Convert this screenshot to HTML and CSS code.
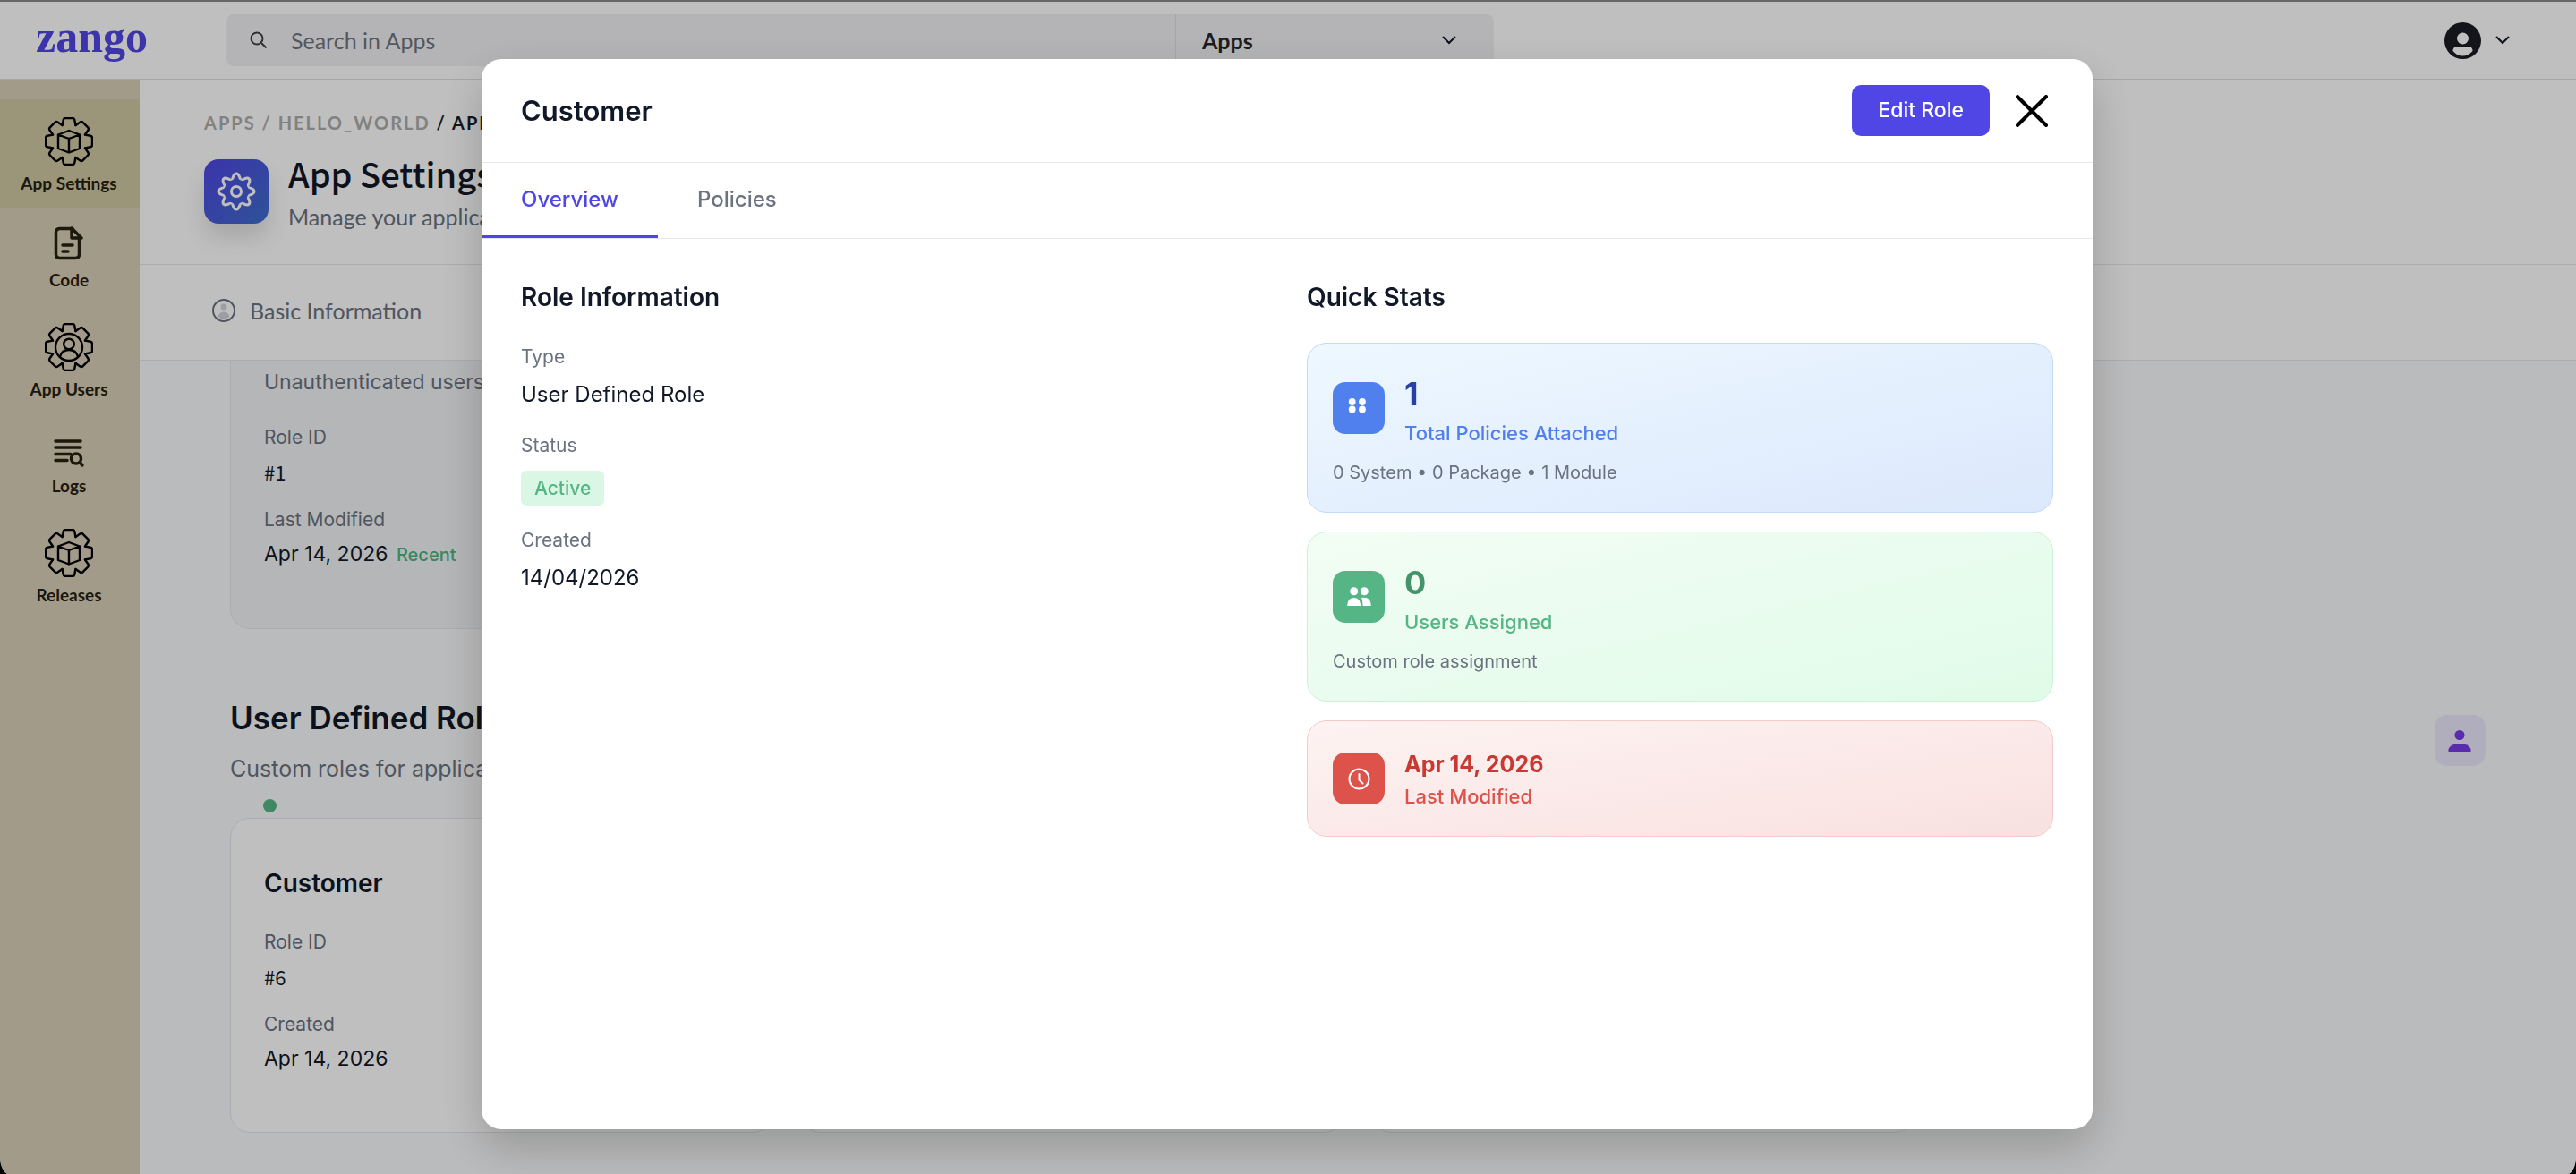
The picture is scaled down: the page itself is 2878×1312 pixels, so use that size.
FILE: index.html
```html
<!DOCTYPE html>
<html lang="en">
<head>
    <meta charset="UTF-8">
    <meta name="viewport" content="width=device-width, initial-scale=1.0">
    <title>Zango - App Settings</title>
    <link rel="stylesheet" href="styles.css">
</head>
<body>
    <!-- shared icon shapes -->
    <svg class="defs" aria-hidden="true">
        <defs>
            <path id="tooth" d="M-7.4-18L-6.3-24Q-5.9-26-3.9-26H3.9Q5.9-26 6.3-24L7.4-18"/>
            <g id="gear">
                <use href="#tooth"/>
                <use href="#tooth" transform="rotate(45)"/>
                <use href="#tooth" transform="rotate(90)"/>
                <use href="#tooth" transform="rotate(135)"/>
                <use href="#tooth" transform="rotate(180)"/>
                <use href="#tooth" transform="rotate(225)"/>
                <use href="#tooth" transform="rotate(270)"/>
                <use href="#tooth" transform="rotate(315)"/>
            </g>
            <path id="cube" d="M0-12L12-7.5V8L0 12.5L-12 8V-7.5ZM-12-7.5L0-3L12-7.5M0-3V12.5"/>
            <path id="lobe" d="M-5.9-14.2C-3-13-4.2-20 0-20C4.2-20 3-13 5.9-14.2"/>
        </defs>
    </svg>

    <div class="page">
        <header class="topbar">
            <a class="logo" href="#">zango</a>
            <div class="search">
                <svg class="search-icon" viewBox="0 0 20 20"><circle cx="8" cy="8" r="6.5"/><path d="M13 13L18.5 18.5"/></svg>
                <input class="search-input" type="text" placeholder="Search in Apps" aria-label="Search in Apps">
                <div class="search-scope">
                    <select class="scope-select" aria-label="Search scope">
                        <option>Apps</option>
                    </select>
                    <svg class="chevron" viewBox="0 0 16 10"><path d="M1 1L8 8L15 1"/></svg>
                </div>
            </div>
            <button class="profile" aria-label="Account">
                <svg class="avatar" viewBox="0 0 41 41"><circle class="avatar-disc" cx="20.5" cy="20.5" r="20.5"/><circle cx="20.5" cy="18" r="6.5"/><path d="M9.5 32V31Q10 27 15 27H26Q31 27 31.500 31V32Q27 37.500 20.500 37.500Q14 37.500 9.500 32Z"/></svg>
                <svg class="chevron" viewBox="0 0 16 10"><path d="M1 1L8 8L15 1"/></svg>
            </button>
        </header>

        <div class="layout">
            <nav class="sidebar">
                <a class="nav-item active" href="#">
                    <svg class="nav-gear" viewBox="-27 -27 54 54"><use href="#gear"/><use href="#cube"/></svg>
                    App Settings
                </a>
                <a class="nav-item" href="#">
                    <svg class="nav-icon" viewBox="0 0 40 40"><path d="M24 2.500H10Q5.500 2.500 5.500 7V31Q5.500 35.500 10 35.500H27Q31.500 35.500 31.500 31V13"/><path d="M23 2.500V13H33.500M23 2L34 13"/><path d="M13 21H24M13 28H19"/></svg>
                    Code
                </a>
                <a class="nav-item" href="#">
                    <svg class="nav-gear" viewBox="-27 -27 54 54"><use href="#gear"/><circle cx="0" cy="0" r="15"/><circle cx="0" cy="-3.500" r="5.800"/><path d="M-10 10.500Q-8 3 0 3Q8 3 10 10.500"/></svg>
                    App Users
                </a>
                <a class="nav-item" href="#">
                    <svg class="nav-icon" viewBox="0 0 40 40"><path d="M5 10H33M5 17H33M5 24.500H22M5 31.500H18"/><circle cx="28" cy="29.500" r="5.500"/><path d="M32 33.500L35 37"/></svg>
                    Logs
                </a>
                <a class="nav-item" href="#">
                    <svg class="nav-gear" viewBox="-27 -27 54 54"><use href="#gear"/><use href="#cube"/></svg>
                    Releases
                </a>
            </nav>

            <main class="content">
                <div class="page-header">
                    <div class="breadcrumb"><a href="#">APPS</a> <a href="#">/ HELLO_WORLD</a> <span>/ APP SETTINGS</span></div>
                    <div class="page-title-row">
                        <div class="page-icon">
                            <svg viewBox="-22 -22 44 44">
                                <use href="#lobe"/>
                                <use href="#lobe" transform="rotate(45)"/>
                                <use href="#lobe" transform="rotate(90)"/>
                                <use href="#lobe" transform="rotate(135)"/>
                                <use href="#lobe" transform="rotate(180)"/>
                                <use href="#lobe" transform="rotate(225)"/>
                                <use href="#lobe" transform="rotate(270)"/>
                                <use href="#lobe" transform="rotate(315)"/>
                                <circle cx="0" cy="0" r="5.500"/>
                            </svg>
                        </div>
                        <div>
                            <h1>App Settings</h1>
                            <p>Manage your application settings</p>
                        </div>
                    </div>
                </div>

                <div class="page-tabs">
                    <a class="page-tab" href="#">
                        <svg viewBox="0 0 26 26"><circle class="ring" cx="13" cy="13" r="12"/><circle class="fill" cx="13" cy="9" r="3.500"/><path class="fill" d="M6.500 20Q8 14.500 13 14.500Q18 14.500 19.500 20Q13 25 6.500 20Z"/></svg>
                        Basic Information
                    </a>
                </div>

                <div class="roles">
                    <div class="role-grid">
                        <div class="role-card system">
                            <p class="role-desc">Unauthenticated users</p>
                            <dl class="role-fields">
                                <div><dt>Role ID</dt><dd class="role-id">#1</dd></div>
                                <div><dt>Last Modified</dt><dd>Apr 14, 2026 <span class="recent">Recent</span></dd></div>
                            </dl>
                        </div>
                    </div>

                    <div class="section-head">
                        <div>
                            <h2>User Defined Roles</h2>
                            <p>Custom roles for application users</p>
                        </div>
                        <div class="section-icon">
                            <svg viewBox="0 0 57 57"><circle cx="28" cy="22.500" r="5.500"/><path d="M15.500 41V38Q18 32 28 32Q38 32 40.500 38V41Z"/></svg>
                        </div>
                    </div>

                    <div class="role-grid">
                        <div class="role-card">
                            <span class="status-dot"></span>
                            <h3>Customer</h3>
                            <dl class="role-fields">
                                <div><dt>Role ID</dt><dd class="role-id">#6</dd></div>
                                <div><dt>Created</dt><dd>Apr 14, 2026</dd></div>
                            </dl>
                        </div>
                        <div class="role-card"></div>
                        <div class="role-card"></div>
                    </div>
                </div>
            </main>
        </div>
    </div>

    <div class="overlay">
        <div class="modal" role="dialog" aria-labelledby="modal-title">
            <div class="modal-header">
                <h2 id="modal-title">Customer</h2>
                <button class="edit-btn">Edit Role</button>
                <button class="close-btn" aria-label="Close">
                    <svg viewBox="0 0 36 36"><path d="M2 2L34 34M34 2L2 34"/></svg>
                </button>
            </div>
            <div class="modal-tabs">
                <button class="tab active">Overview</button>
                <button class="tab">Policies</button>
            </div>
            <div class="modal-body">
                <section>
                    <h3>Role Information</h3>
                    <dl class="info">
                        <div><dt>Type</dt><dd>User Defined Role</dd></div>
                        <div><dt>Status</dt><dd class="badge-row"><span class="badge">Active</span></dd></div>
                        <div><dt>Created</dt><dd>14/04/2026</dd></div>
                    </dl>
                </section>
                <section>
                    <h3>Quick Stats</h3>
                    <div class="stats">
                        <div class="stat blue">
                            <div class="stat-main">
                                <svg class="stat-icon" viewBox="0 0 58 58"><circle cx="21.700" cy="22" r="3.900"/><circle cx="33" cy="22" r="3.900"/><circle cx="21.700" cy="30.500" r="3.900"/><circle cx="33" cy="30.500" r="3.900"/></svg>
                                <div>
                                    <p class="stat-value">1</p>
                                    <p class="stat-label">Total Policies Attached</p>
                                </div>
                            </div>
                            <p class="stat-note">0 System • 0 Package • 1 Module</p>
                        </div>
                        <div class="stat green">
                            <div class="stat-main">
                                <svg class="stat-icon" viewBox="0 0 58 58"><circle cx="23.700" cy="22.700" r="4.500"/><circle cx="35.300" cy="22.700" r="4.500"/><path d="M16.300 39V37.500Q17 30 23.700 30Q30.300 30 31 37.500V39ZM32 30Q42 28.500 42.700 37.500V39H33.500V37Q33.500 33 32 30Z"/></svg>
                                <div>
                                    <p class="stat-value">0</p>
                                    <p class="stat-label">Users Assigned</p>
                                </div>
                            </div>
                            <p class="stat-note">Custom role assignment</p>
                        </div>
                        <div class="stat red">
                            <div class="stat-main">
                                <svg class="stat-icon outline" viewBox="0 0 58 58"><circle cx="29.500" cy="29.500" r="11"/><path d="M29.500 24V30.500L33.500 34.500"/></svg>
                                <div>
                                    <p class="stat-value small">Apr 14, 2026</p>
                                    <p class="stat-label">Last Modified</p>
                                </div>
                            </div>
                        </div>
                    </div>
                </section>
            </div>
        </div>
    </div>
</body>
</html>
```
FILE: styles.css
```css
* {
    box-sizing: border-box;
    margin: 0;
    padding: 0;
}

body {
    font-family: 'Inter', sans-serif;
    background-color: #000;
    color: #111827;
    height: 100vh;
    overflow: hidden;
}

a {
    color: inherit;
    text-decoration: none;
}

button {
    font-family: inherit;
    border: none;
    background: none;
    cursor: pointer;
}

.defs {
    position: absolute;
    width: 0;
    height: 0;
}

.page {
    display: flex;
    flex-direction: column;
    height: 100vh;
    overflow: hidden;
    background-color: #fff;
    border-top: 2px solid #888;
    border-radius: 0 0 10px 10px / 0 0 20px 20px;
}

/* Top bar */
.topbar {
    display: flex;
    align-items: center;
    flex-shrink: 0;
    height: 87px;
    padding: 0 74px 0 40px;
    border-bottom: 1px solid #dcdee2;
    font-family: 'Lato', sans-serif;
}

.logo {
    width: 213px;
    padding-bottom: 8px;
    font-family: 'Liberation Serif', serif;
    font-size: 50px;
    font-weight: bold;
    line-height: 56px;
    color: #4f46e5;
}

.search {
    display: flex;
    flex: 1;
    align-items: center;
    max-width: 1416px;
    height: 58px;
    padding-left: 26px;
    background-color: #f0f1f4;
    border-radius: 8px;
}

.search-icon {
    width: 20px;
    height: 20px;
    fill: none;
    stroke: #3f4044;
    stroke-width: 2;
}

.search-input {
    flex: 1;
    min-width: 0;
    height: 58px;
    padding-left: 26px;
    border: none;
    outline: none;
    background: none;
    font-family: inherit;
    font-size: 25px;
}

.search-input::placeholder {
    color: #70757e;
}

.search-scope {
    display: flex;
    align-items: center;
    width: 356px;
    height: 58px;
    padding: 0 42px 0 29px;
    border-left: 1px solid #dcdee2;
}

.scope-select {
    flex: 1;
    appearance: none;
    border: none;
    background: none;
    font-family: inherit;
    font-size: 25px;
    font-weight: bold;
    color: #26272b;
}

.chevron {
    width: 16px;
    height: 10px;
    fill: none;
    stroke: #111827;
    stroke-width: 2;
}

.profile {
    display: flex;
    align-items: center;
    gap: 16px;
    margin-left: auto;
}

.avatar {
    width: 41px;
    height: 41px;
    fill: #fff;
}

.avatar-disc {
    fill: #1b1c23;
}

/* Sidebar */
.layout {
    display: flex;
    flex: 1;
    min-height: 0;
}

.sidebar {
    width: 156px;
    flex-shrink: 0;
    padding: 22px 2px 0 0;
    background-color: #dacfb9;
}

.nav-item {
    display: flex;
    flex-direction: column;
    align-items: center;
    gap: 8px;
    margin-right: -2px;
    padding: 20px 2px 16px 0;
    font-family: 'Lato', sans-serif;
    font-size: 19px;
    font-weight: bold;
    line-height: 24px;
    color: #26210f;
}

.nav-item.active {
    background-color: #cfc7a3;
}

.nav-gear,
.nav-icon {
    fill: none;
    stroke: #000;
    stroke-width: 2.4;
    stroke-linecap: round;
    stroke-linejoin: round;
}

.nav-gear {
    width: 54px;
    height: 54px;
}

.nav-icon {
    width: 40px;
    height: 40px;
    stroke: #26210f;
    stroke-width: 3.5;
}

/* Page */
.content {
    flex: 1;
    min-width: 0;
    overflow: hidden;
    background-color: #f9fafb;
}

.page-header {
    padding: 36px 72px 37px;
    background-color: #fff;
    border-bottom: 1px solid #e5e7eb;
    font-family: 'Lato', sans-serif;
}

.breadcrumb {
    margin-bottom: 29px;
    font-size: 20px;
    font-weight: bold;
    line-height: 24px;
    letter-spacing: 2px;
    color: #1b1c23;
}

.breadcrumb a {
    color: #adadad;
}

.page-title-row {
    display: flex;
    align-items: flex-start;
    gap: 22px;
}

.page-icon {
    display: flex;
    align-items: center;
    justify-content: center;
    width: 72px;
    height: 72px;
    border-radius: 16px;
    background: linear-gradient(135deg, #4f46e5, #3f6ecb);
    box-shadow: 0 16px 24px rgba(0, 0, 0, 0.12);
}

.page-icon svg {
    width: 44px;
    height: 44px;
    fill: none;
    stroke: #fff;
    stroke-width: 3;
}

.page-header h1 {
    margin-bottom: 16px;
    font-family: 'Noto Sans CJK SC', sans-serif;
    font-size: 38px;
    font-weight: 500;
    line-height: 32px;
}

.page-header p {
    font-size: 25px;
    line-height: 32px;
    color: #6b7280;
}

.page-tabs {
    display: flex;
    padding: 35px 81px 39px;
    background-color: #fff;
    border-bottom: 1px solid #e5e7eb;
}

.page-tab {
    display: flex;
    align-items: center;
    gap: 16px;
    font-family: 'Lato', sans-serif;
    font-size: 25px;
    line-height: 32px;
    color: #6b7280;
}

.page-tab svg {
    width: 26px;
    height: 26px;
}

.page-tab .ring {
    fill: none;
    stroke: #6b7280;
    stroke-width: 2;
}

.page-tab .fill {
    fill: #d1d3d7;
}

.roles {
    padding: 0 101px;
}

.role-grid {
    display: grid;
    grid-template-columns: repeat(4, 1fr);
    gap: 32px;
}

.role-card {
    position: relative;
    padding: 52px 37px 64px;
    background-color: #fff;
    border: 1px solid #e5e7eb;
    border-radius: 22px;
}

.role-card.system {
    padding-top: 8px;
    background-color: #f1f3f4;
    border-top: none;
    border-radius: 0 0 22px 22px;
}

.role-card h3 {
    margin-bottom: 30px;
    font-size: 28px;
    font-weight: 600;
    line-height: 40px;
}

.role-desc {
    margin-bottom: 30px;
    font-size: 23px;
    line-height: 32px;
    color: #6b7280;
}

.role-fields {
    display: flex;
    flex-direction: column;
    gap: 20px;
}

.role-fields dt {
    margin-bottom: 4px;
    font-size: 21px;
    line-height: 32px;
    color: #6b7280;
}

.role-fields dd {
    font-size: 23px;
    line-height: 36px;
}

.role-fields .role-id {
    font-family: 'Noto Sans CJK SC', sans-serif;
    font-size: 22px;
}

.recent {
    margin-left: 3px;
    font-size: 20px;
    font-weight: 500;
    color: #4cb580;
}

.status-dot {
    position: absolute;
    top: -22px;
    left: 36px;
    width: 15px;
    height: 15px;
    border-radius: 50%;
    background-color: #56b585;
}

.section-head {
    display: flex;
    align-items: center;
    justify-content: space-between;
    margin: 75px 0 37px;
}

.section-head h2 {
    margin-bottom: 15px;
    font-size: 35px;
    font-weight: 600;
    line-height: 48px;
}

.section-head p {
    font-size: 25px;
    line-height: 36px;
    color: #6b7280;
}

.section-icon {
    width: 57px;
    height: 57px;
    border-radius: 14px;
    background-color: #ebe8fd;
    fill: #773be7;
}

/* Modal */
.overlay {
    position: fixed;
    inset: 0;
    display: flex;
    justify-content: center;
    padding: 66px 2px 50px 0;
    background-color: rgba(0, 0, 0, 0.25);
}

.modal {
    display: flex;
    flex-direction: column;
    width: 1800px;
    max-width: 90%;
    background-color: #fff;
    border-radius: 22px;
    box-shadow: 0 20px 50px rgba(0, 0, 0, 0.2);
    overflow: hidden;
}

.modal-header {
    display: flex;
    align-items: center;
    padding: 29px 50px 29px 44px;
    border-bottom: 1px solid #e5e7eb;
}

.modal-header h2 {
    flex: 1;
    font-size: 31px;
    font-weight: 600;
    line-height: 40px;
}

.edit-btn {
    padding: 0 29px;
    border-radius: 10px;
    background-color: #4f46e5;
    color: #fff;
    font-size: 23px;
    font-weight: 500;
    line-height: 57px;
}

.close-btn {
    display: flex;
    margin-left: 29px;
}

.close-btn svg {
    width: 36px;
    height: 36px;
    stroke: #000;
    stroke-width: 4;
    stroke-linecap: round;
}

.modal-tabs {
    display: flex;
    border-bottom: 1px solid #e5e7eb;
}

.tab {
    padding: 21px 44px;
    border-bottom: 3px solid transparent;
    font-size: 24px;
    font-weight: 500;
    line-height: 39px;
    color: #6b7280;
}

.tab.active {
    border-bottom-color: #4f46e5;
    color: #4f46e5;
}

.modal-body {
    display: grid;
    grid-template-columns: 1fr 1fr;
    gap: 44px;
    padding: 45px 44px 44px;
}

.modal-body h3 {
    margin-bottom: 31px;
    font-size: 28px;
    font-weight: 600;
    line-height: 40px;
}

.info {
    display: flex;
    flex-direction: column;
    gap: 23px;
}

.info dt {
    margin-bottom: 8px;
    font-size: 21px;
    line-height: 32px;
    color: #6b7280;
}

.info dd {
    font-size: 24px;
    line-height: 36px;
}

.info .badge-row {
    display: flex;
    padding-top: 4px;
}

.badge {
    padding: 0 15px;
    border-radius: 6px;
    background-color: #daf7e5;
    color: #56b585;
    font-size: 21px;
    font-weight: 500;
    line-height: 39px;
}

.stats {
    display: flex;
    flex-direction: column;
    gap: 21px;
}

.stat {
    padding: 28px;
    border: 1px solid;
    border-radius: 22px;
}

.stat-main {
    display: flex;
    align-items: center;
    gap: 22px;
}

.stat-icon {
    width: 58px;
    height: 58px;
    border-radius: 14px;
    fill: #fff;
}

.stat-icon.outline {
    fill: none;
    stroke: #fff;
    stroke-width: 2;
    stroke-linecap: round;
}

.stat-value {
    font-size: 36px;
    font-weight: 700;
    line-height: 56px;
}

.stat-value.small {
    font-size: 25px;
    line-height: 40px;
}

.stat-label {
    font-size: 22px;
    font-weight: 500;
    line-height: 32px;
}

.stat-note {
    margin-top: 12px;
    font-size: 20px;
    line-height: 32px;
    color: #6b7280;
}

.stat.blue {
    background: linear-gradient(to bottom right, #edf8ff, #dce8fc);
    border-color: #c3d9fa;
}

.stat.green {
    background: linear-gradient(to bottom right, #f3fdf5, #e0fbe8);
    border-color: #c9f3d4;
}

.stat.red {
    background: linear-gradient(to bottom right, #fdf3f2, #f8e1e0);
    border-color: #f5caca;
}

.blue .stat-icon {
    background-color: #4f80ee;
}

.blue .stat-value {
    color: #2940a8;
}

.blue .stat-label {
    color: #4f80ee;
}

.green .stat-icon {
    background-color: #56b585;
}

.green .stat-value {
    color: #44936b;
}

.green .stat-label {
    color: #56b585;
}

.red .stat-icon {
    background-color: #de524c;
}

.red .stat-value {
    color: #ca3931;
}

.red .stat-label {
    color: #de524c;
}
```
